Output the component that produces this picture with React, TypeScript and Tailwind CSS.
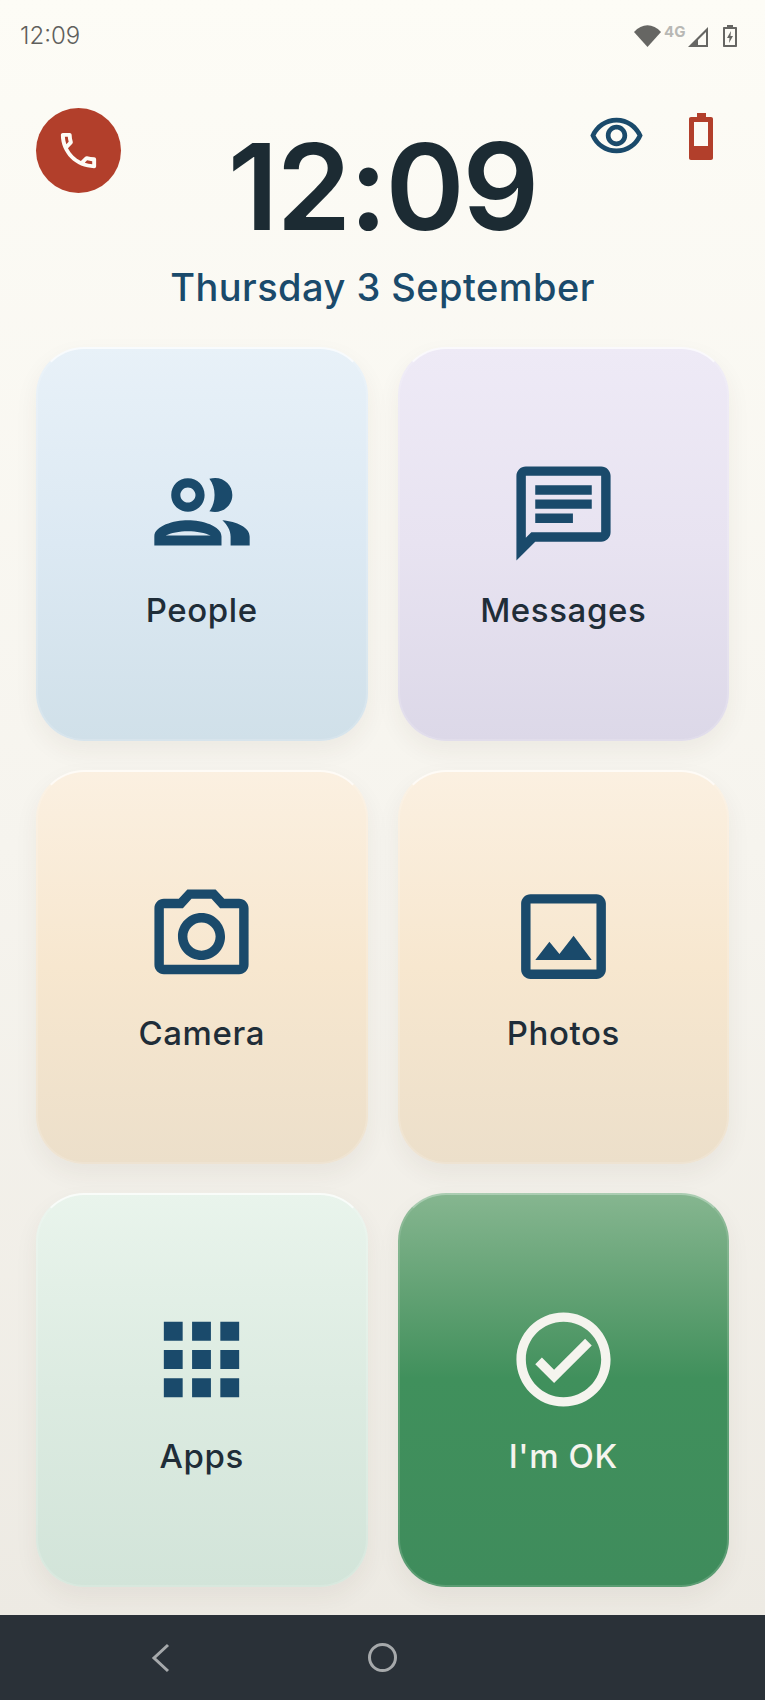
const ICON = "fill-[#1a4a6b]";

const paths = {
  people: "M16.7 13.7C20 14 23 15.3 23 17.5V19.5H18.6V17.5C18.6 16 17.8 14.7 16.7 13.7ZM13.7 4.1C14.2 4 14.6 3.95 15 3.95C17.3 3.95 19 5.7 19 7.85S17.3 11.75 15 11.75C14.6 11.75 14.2 11.7 13.7 11.6C14.5 10.6 14.9 9.3 14.9 7.85S14.5 5.1 13.7 4.1ZM8.75 4C6.6 4 4.9 5.7 4.9 7.85S6.6 11.7 8.75 11.7 12.6 10 12.6 7.85 10.9 4 8.75 4ZM8.75 6.1C9.7 6.1 10.5 6.9 10.5 7.85S9.7 9.6 8.75 9.6 7 8.8 7 7.85 7.8 6.1 8.75 6.1ZM8.75 13.7C5.5 13.7 1 15 1 17.4V19.5H16.5V17.4C16.5 15 12 13.7 8.75 13.7ZM14 17.2H3.6C4.8 16.6 6.8 16.2 8.75 16.2S12.8 16.6 14 17.2Z",
  chat: "M20 2H4c-1.1 0-2 .9-2 2v18l4-4h14c1.1 0 2-.9 2-2V4c0-1.1-.9-2-2-2zm0 14H5.17L4 17.17V4h16v12zM6 12h8v2H6zm0-3h12v2H6zm0-3h12v2H6z",
  camera: "M14.12 4l1.83 2H20v12H4V6h4.05l1.83-2h4.24M15 2H9L7.17 4H4c-1.1 0-2 .9-2 2v12c0 1.1.9 2 2 2h16c1.1 0 2-.9 2-2V6c0-1.1-.9-2-2-2h-3.17L15 2zm-3 7c1.65 0 3 1.35 3 3s-1.35 3-3 3-3-1.35-3-3 1.35-3 3-3m0-2c-2.76 0-5 2.24-5 5s2.24 5 5 5 5-2.24 5-5-2.24-5-5-5z",
  image: "M19 5v14H5V5h14m0-2H5c-1.1 0-2 .9-2 2v14c0 1.1.9 2 2 2h14c1.1 0 2-.9 2-2V5c0-1.1-.9-2-2-2zm-4.86 8.86l-3 3.87L9 13.14 6 17h12l-3.86-5.14z",
  apps: "M4 4h4v4H4zM10 4h4v4h-4zM16 4h4v4h-4zM4 10h4v4H4zM10 10h4v4h-4zM16 10h4v4h-4zM4 16h4v4H4zM10 16h4v4h-4zM16 16h4v4h-4z",
  check: "M12 2C6.48 2 2 6.48 2 12s4.48 10 10 10 10-4.48 10-10S17.52 2 12 2zm0 18c-4.41 0-8-3.59-8-8s3.59-8 8-8 8 3.59 8 8-3.59 8-8 8zm4.59-12.42L10 14.17l-2.59-2.58L6 13l4 4 8-8z",
  eye: "M12 6.5c3.79 0 7.17 2.13 8.82 5.5-1.65 3.37-5.02 5.5-8.82 5.5S4.83 15.37 3.18 12C4.83 8.63 8.21 6.5 12 6.5m0-2C7 4.5 2.73 7.61 1 12c1.73 4.39 6 7.5 11 7.5s9.27-3.11 11-7.5c-1.73-4.39-6-7.5-11-7.5zm0 5c1.38 0 2.5 1.12 2.5 2.5s-1.12 2.5-2.5 2.5-2.5-1.12-2.5-2.5 1.12-2.5 2.5-2.5m0-2c-2.48 0-4.5 2.02-4.5 4.5s2.02 4.5 4.5 4.5 4.5-2.02 4.5-4.5-2.02-4.5-4.5-4.5z",
  phone: "M6.54 5c.06.89.21 1.76.45 2.59l-1.2 1.2c-.41-1.2-.67-2.47-.76-3.79h1.51m9.86 12.02c.85.24 1.72.39 2.6.45v1.49c-1.32-.09-2.59-.35-3.8-.75l1.2-1.19M7.5 3H4c-.55 0-1 .45-1 1 0 9.39 7.61 17 17 17 .55 0 1-.45 1-1v-3.49c0-.55-.45-1-1-1-1.24 0-2.45-.2-3.57-.57-.1-.04-.21-.05-.31-.05-.26 0-.51.1-.71.29l-2.2 2.2c-2.83-1.45-5.15-3.76-6.59-6.59l2.2-2.2c.28-.28.36-.67.25-1.02C8.7 6.45 8.5 5.25 8.5 4c0-.55-.45-1-1-1z",
};

function Glyph({ d, className }: { d: string; className: string }) {
  return (
    <svg viewBox="0 0 24 24" className={className}>
      <path d={d} fillRule="evenodd" />
    </svg>
  );
}

type CardProps = {
  label: string;
  d: string;
  bg: string;
  iconClass?: string;
  textClass?: string;
  border?: string;
};

function Card({ label, d, bg, iconClass = `h-[113px] w-[113px] ${ICON}`, textClass = "text-[#1f2d38]", border = "border-white/15 border-t-white/70" }: CardProps) {
  return (
    <div className={`flex h-[394px] flex-col items-center justify-center gap-5 rounded-[48px] border-2 bg-origin-border pb-[2px] shadow-[0_10px_24px_rgba(60,50,30,0.06)] ${bg} ${border}`}>
      <div className="flex h-[113px] w-[113px] items-center justify-center">
        <Glyph d={d} className={iconClass} />
      </div>
      <div className={`text-[33px] leading-10 font-medium tracking-[0.6px] ${textClass}`}>{label}</div>
    </div>
  );
}

export default function App() {
  return (
    <div className="flex h-[1700px] w-[765px] flex-col overflow-hidden bg-gradient-to-b from-[#fdfcf6] via-[#f6f4ee] to-[#ece9e2] font-['Inter','Liberation_Sans',sans-serif]">
      {/* Status bar */}
      <div className="flex h-[72px] items-start justify-between pt-[22px] pr-[28px] pl-5">
        <span className="text-[24px] leading-7 font-light text-[#5f5f5c]">12:09</span>
        <div className="flex items-start pt-[3px]">
          <svg viewBox="0 0 27 22" className="h-[22px] w-[27px] fill-[#666663]">
            <path d="M0 7C8-2 19-2 27 7L13.5 22Z" />
          </svg>
          <span className="ml-[3px] w-[24px] text-[15px] leading-[13px] font-bold text-[#b8b8b4]">4G</span>
          <svg viewBox="0 0 20 20" className="mt-[2px] h-5 w-5 fill-[#666663]">
            <path fillRule="evenodd" d="M20 0V20H0ZM18 5 10 13V18H18Z" />
          </svg>
          <svg viewBox="0 0 14 22" className="ml-[15px] h-[22px] w-[14px] fill-[#666663]">
            <path fillRule="evenodd" d="M4 0H10V2H13C13.6 2 14 2.4 14 3V21C14 21.6 13.6 22 13 22H1C.4 22 0 21.6 0 21V3C0 2.4.4 2 1 2H4ZM2 4V20H12V4Z" />
            <path d="M8 6 4 13H6.5L6 18 10 11H7.5Z" />
          </svg>
        </div>
      </div>

      {/* Header */}
      <div className="grid h-[275px] grid-cols-[1fr_auto_1fr] items-start">
        <div className="min-w-0 pt-9 pl-9">
          <div className="flex h-[85px] w-[85px] items-center justify-center rounded-full bg-[#b23f2b]">
            <Glyph d={paths.phone} className="h-[47px] w-[47px] fill-[#fdfcf6]" />
          </div>
        </div>
        <div className="flex flex-col items-center pt-[53px]">
          <div className="text-[120px] leading-[124px] font-semibold tracking-[-2px] text-[#1c2b33]">12:09</div>
          <div className="mt-[15px] text-[38px] leading-[46px] font-medium tracking-[0.45px] text-[#1a4a6b]">Thursday 3 September</div>
        </div>
        <div className="flex min-w-0 items-start justify-end pt-[35px] pr-[52px]">
          <Glyph d={paths.eye} className={`h-[57px] w-[57px] shrink-0 ${ICON}`} />
          <svg viewBox="0 0 24 47" className="mt-[6px] ml-[44px] h-[47px] w-6 shrink-0 fill-[#b23f2b]">
            <path fillRule="evenodd" d="M8 0H17V4H22C23.2 4 24 4.8 24 6V45C24 46.2 23.2 47 22 47H2C.8 47 0 46.2 0 45V6C0 4.8.8 4 2 4H8ZM5 9V33H19V9Z" />
          </svg>
        </div>
      </div>

      {/* Tiles */}
      <div className="grid grid-cols-2 gap-x-[30px] gap-y-[29px] px-9">
        <Card label="People" d={paths.people} bg="bg-gradient-to-b from-[#e8f1f8] via-[#dce9f3] to-[#d0e0e9]" iconClass={`h-[104px] w-[104px] ${ICON}`} />
        <Card label="Messages" d={paths.chat} bg="bg-gradient-to-b from-[#eeeaf6] via-[#e8e3f1] to-[#dcd8e8]" />
        <Card label="Camera" d={paths.camera} bg="bg-gradient-to-b from-[#fbf0e1] via-[#f7e7cf] to-[#ecdfca]" />
        <Card label="Photos" d={paths.image} bg="bg-gradient-to-b from-[#fbf0e1] via-[#f7e7cf] to-[#ecdfca]" />
        <Card label="Apps" d={paths.apps} bg="bg-gradient-to-b from-[#e9f4ec] via-[#dcebe1] to-[#d2e4d9]" />
        <Card
          label="I'm OK"
          d={paths.check}
          bg="bg-gradient-to-b from-[#86b690] via-[#40905c] via-47% to-[#3f8c5c]"
          iconClass="h-[113px] w-[113px] fill-[#f5f4ee]"
          textClass="text-[#f5f4ee]"
          border="border-[#cfe3d3]/20 border-t-[#cfe3d3]/50"
        />
      </div>

      {/* Navigation bar */}
      <div className="mt-auto flex h-[85px] items-center bg-[#2a3138] pl-[150px]">
        <svg viewBox="0 0 20 30" className="h-[30px] w-5 fill-none stroke-[#a6a9ab] stroke-[3px]">
          <path d="M18 2 4 15 18 28" />
        </svg>
        <div className="ml-[198px] h-[29px] w-[29px] rounded-full border-[3.5px] border-[#a6a9ab]" />
      </div>
    </div>
  );
}
